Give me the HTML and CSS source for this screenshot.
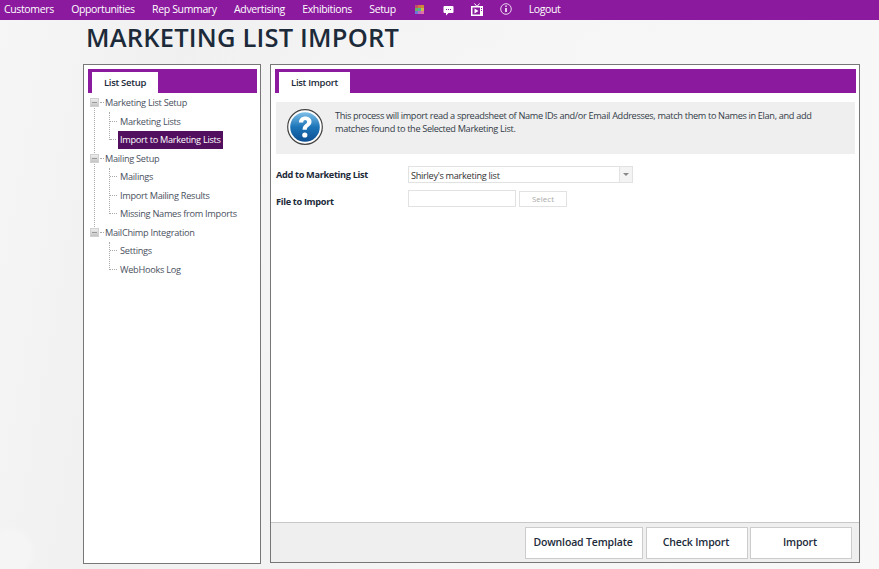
FILE: index.html
```html
<!DOCTYPE html>
<html lang="en">
<head>
<meta charset="utf-8">
<title>Marketing List Import</title>
<link rel="stylesheet" href="styles.css">
</head>
<body>
<nav class="topnav">
  <a class="navlink">Customers</a>
  <a class="navlink">Opportunities</a>
  <a class="navlink">Rep Summary</a>
  <a class="navlink">Advertising</a>
  <a class="navlink">Exhibitions</a>
  <a class="navlink">Setup</a>
  <svg class="navicon grid" width="9" height="9" viewBox="0 0 9 9">
    <rect width="3" height="3" fill="#c0506a"/><rect x="3" width="3" height="3" fill="#d8743f"/><rect x="6" width="3" height="3" fill="#c98a3a"/>
    <rect y="3" width="3" height="3" fill="#6fae5a"/><rect x="3" y="3" width="3" height="3" fill="#4fb0a0"/><rect x="6" y="3" width="3" height="3" fill="#d0b84a"/>
    <rect y="6" width="3" height="3" fill="#6a78d8"/><rect x="3" y="6" width="3" height="3" fill="#c868c0"/><rect x="6" y="6" width="3" height="3" fill="#e070a8"/>
  </svg>
  <svg class="navicon chat" width="11" height="11" viewBox="0 0 11 11">
    <path d="M1.500 1h8a1 1 0 0 1 1 1v5a1 1 0 0 1-1 1H5.500L3 10.500V8H1.500a1 1 0 0 1-1-1V2a1 1 0 0 1 1-1z" fill="#fff"/>
    <path d="M3 4.500h1M5 4.500h1M7 4.500h1" stroke="#8b1a9e" stroke-width="1"/>
  </svg>
  <svg class="navicon tv" width="12" height="13" viewBox="0 0 12 13">
    <path d="M3.500 0.500l2.500 3 2.500-3" fill="none" stroke="#fff" stroke-width="1"/>
    <rect y="3" width="12" height="10" fill="#fff"/>
    <rect x="1.500" y="4.500" width="7.500" height="7" fill="#8b1a9e"/>
    <path d="M3.500 5.500v5l4-2.500z" fill="#fff"/>
    <rect x="10" y="5" width="1" height="1" fill="#8b1a9e"/>
    <rect x="10" y="7" width="1" height="1" fill="#8b1a9e"/>
  </svg>
  <svg class="navicon info" width="12" height="12" viewBox="0 0 12 12">
    <circle cx="6" cy="6" r="5.300" fill="none" stroke="#e8d4ec" stroke-width="1"/>
    <path d="M6 5v4" stroke="#fff" stroke-width="1.600"/><path d="M6 2.500v1.300" stroke="#fff" stroke-width="1.600"/>
  </svg>
  <a class="navlink logout">Logout</a>
</nav>

<h1 class="pagetitle">MARKETING LIST IMPORT</h1>

<main class="columns">
  <section class="panel sidepanel">
    <div class="tabbar"><span class="tab">List Setup</span></div>
    <ul class="tree">
      <li class="group">
        <div class="groupname"><span class="toggle"></span><span class="dash"></span>Marketing List Setup</div>
        <ul class="branch">
          <li class="leaf"><span class="dash"></span>Marketing Lists</li>
          <li class="leaf"><span class="dash short"></span><span class="selected">Import to Marketing Lists</span></li>
        </ul>
      </li>
      <li class="group">
        <div class="groupname"><span class="toggle"></span><span class="dash"></span>Mailing Setup</div>
        <ul class="branch">
          <li class="leaf"><span class="dash"></span>Mailings</li>
          <li class="leaf"><span class="dash"></span>Import Mailing Results</li>
          <li class="leaf"><span class="dash"></span>Missing Names from Imports</li>
        </ul>
      </li>
      <li class="group last">
        <div class="groupname"><span class="toggle"></span><span class="dash"></span>MailChimp Integration</div>
        <ul class="branch">
          <li class="leaf"><span class="dash"></span>Settings</li>
          <li class="leaf"><span class="dash"></span>WebHooks Log</li>
        </ul>
      </li>
    </ul>
  </section>

  <section class="panel mainpanel">
    <div class="tabbar"><span class="tab">List Import</span></div>
    <div class="infobox">
      <svg class="helpicon" width="36" height="36" viewBox="0 0 36 36">
        <defs>
          <linearGradient id="helpblue" x1="0" y1="0" x2="0" y2="1">
            <stop offset="0" stop-color="#7fc0e8"/>
            <stop offset="0.5" stop-color="#1c75b8"/>
            <stop offset="1" stop-color="#0d4f92"/>
          </linearGradient>
        </defs>
        <circle cx="18" cy="18" r="17.300" fill="#fff" stroke="#444" stroke-width="1.200"/>
        <circle cx="18" cy="18" r="14.800" fill="url(#helpblue)"/>
        <path d="M12 13.500c0-4 3-6 6.300-6 3.600 0 6.200 2.200 6.200 5.200 0 2.300-1.200 3.500-2.800 4.700-1.500 1.100-1.900 1.800-1.900 3.400h-4.200c0-2.600.7-3.800 2.500-5.200 1.300-1 2-1.700 2-2.800 0-1.200-.8-1.900-1.900-1.900-1.300 0-2 1-2 2.600z" fill="#fff"/>
        <circle cx="17.800" cy="26" r="2.600" fill="#fff"/>
      </svg>
      <p class="infotext">This process will import read a spreadsheet of Name IDs and/or Email Addresses, match them to Names in Elan, and add matches found to the Selected Marketing List.</p>
    </div>
    <form class="importform">
      <div class="formrow">
        <label class="fieldlabel">Add to Marketing List</label>
        <div class="combo"><span class="combovalue">Shirley's marketing list</span><span class="comboarrow"></span></div>
      </div>
      <div class="formrow filerow">
        <label class="fieldlabel">File to Import</label>
        <div class="filefield"></div>
        <span class="selectbtn">Select</span>
      </div>
    </form>
    <footer class="actions">
      <button class="actionbtn download" type="button">Download Template</button>
      <button class="actionbtn check" type="button">Check Import</button>
      <button class="actionbtn import" type="button">Import</button>
    </footer>
  </section>
</main>
</body>
</html>
```

FILE: styles.css
```css
* { box-sizing: border-box; }
html, body { height: 100%; }
body {
  margin: 0;
  height: 569px;
  overflow: hidden;
  display: flex;
  flex-direction: column;
  font-family: "Open Sans", "Noto Sans", sans-serif;
  color: #2b3440;
  background:
    radial-gradient(circle at 10px 552px, #f5f5f5 0 20px, transparent 26px),
    radial-gradient(ellipse at 60% 40%, #f8f8f8 0, transparent 60%),
    linear-gradient(100deg, #f6f6f6, #f0f0f0 20%, #f5f5f5 55%, #f8f8f8);
}
.topnav {
  flex: none;
  height: 20px;
  background: #8b1a9e;
  display: flex;
  align-items: center;
  padding-left: 4px;
}
.navlink {
  color: #fff;
  font-size: 10.500px;
  letter-spacing: -0.36px;
  margin-right: 17.400px;
  line-height: 16px;
  margin-top: -3px;
  white-space: nowrap;
}
.navicon { flex: none; margin-top: -2px; }
.grid { margin-left: 1.500px; margin-right: 19px; }
.chat { margin-right: 17px; margin-top: 0; }
.tv { margin-right: 17px; margin-top: -2px; }
.info { margin-right: 17px; }
.logout { margin-right: 0; }
.pagetitle {
  flex: none;
  margin: 2px 0 0 86px;
  height: 42px;
  font-size: 25.500px;
  line-height: 30px;
  font-weight: 600;
  letter-spacing: 0.2px;
  color: #1c2a3a;
  white-space: nowrap;
}
.columns {
  flex: none;
  display: flex;
  gap: 9px;
  margin-left: 83px;
  height: 500px;
}
.panel {
  background: #fff;
  border: 1px solid #777;
  display: flex;
  flex-direction: column;
}
.sidepanel { width: 178px; padding: 4px 3px 0 4px; }
.mainpanel { width: 590px; height: 499px; padding-top: 4px; }
.tabbar {
  flex: none;
  height: 24px;
  background: #8b1a9e;
  padding: 3px 0 0 4px;
  display: flex;
}
.mainpanel .tabbar { margin: 0 3px 0 4px; }
.tab {
  background: #fff;
  height: 21px;
  font-size: 9.500px;
  font-weight: 600;
  line-height: 21px;
  letter-spacing: -0.3px;
  color: #1c2a3a;
  text-align: center;
}
.sidepanel .tab { width: 66px; }
.mainpanel .tab { width: 71px; }

.tree, .branch { list-style: none; margin: 0; padding: 0; }
.tree { font-size: 9.200px; letter-spacing: -0.28px; color: #4a5160; padding-top: 0.500px; }
.group { position: relative; }
.group::before {
  content: "";
  position: absolute;
  left: 6px;
  top: 10px;
  bottom: -8px;
  border-left: 1px dotted #aaa;
}
.group.last::before { display: none; }
.groupname {
  height: 18.500px;
  display: flex;
  align-items: center;
  padding-left: 2px;
  position: relative;
}
.toggle {
  width: 9px;
  height: 9px;
  flex: none;
  background: linear-gradient(#ededed, #c4c4c4);
  border: 1px solid #d0d0d0;
  position: relative;
  z-index: 1;
}
.toggle::after {
  content: "";
  position: absolute;
  left: 1px;
  right: 1px;
  top: 3px;
  height: 1px;
  background: #9a9a9a;
}
.dash {
  flex: none;
  width: 4px;
  border-top: 1px dotted #aaa;
  margin: 0 1px 0 1px;
}
.branch { padding-left: 21px; position: relative; }
.branch::before {
  content: "";
  position: absolute;
  left: 21px;
  top: 0;
  bottom: 9px;
  border-left: 1px dotted #aaa;
}
.leaf {
  height: 18.500px;
  display: flex;
  align-items: center;
  padding-left: 1px;
}
.leaf .dash { width: 7px; margin: 0 3px 0 0; }
.leaf .dash.short { width: 6px; margin-right: 2px; }
.selected {
  background: #520f5f;
  color: #fff;
  padding: 0 2px;
  line-height: 18px;
  height: 18px;
  white-space: nowrap;
}

.infobox {
  flex: none;
  height: 52px;
  margin: 9px 4px 0 5px;
  background: #efefef;
  display: flex;
  align-items: flex-start;
  padding: 7px 0 0 11px;
}
.helpicon { flex: none; }
.infotext {
  margin: 0 0 0 12px;
  width: 490px;
  font-size: 9.200px;
  line-height: 13px;
  letter-spacing: -0.34px;
  color: #333c48;
}
.importform {
  flex: 1;
  padding: 12px 0 0 5px;
  display: flex;
  flex-direction: column;
  gap: 7px;
}
.formrow { display: flex; align-items: center; height: 17px; }
.fieldlabel {
  width: 132px;
  flex: none;
  font-size: 9.200px;
  font-weight: 700;
  letter-spacing: -0.33px;
  color: #1c2a3a;
}
.filerow .fieldlabel { margin-top: 6px; }
.combo {
  width: 225px;
  height: 17px;
  border: 1px solid #e2e2e2;
  background: #fff;
  display: flex;
}
.combovalue {
  flex: 1;
  font-size: 9.200px;
  line-height: 17px;
  letter-spacing: -0.3px;
  padding-left: 2px;
  color: #333;
}
.comboarrow {
  flex: none;
  width: 13px;
  background: #f3f3f3;
  border-left: 1px solid #e2e2e2;
  position: relative;
}
.comboarrow::after {
  content: "";
  position: absolute;
  left: 3px;
  top: 6px;
  border-left: 3px solid transparent;
  border-right: 3px solid transparent;
  border-top: 3px solid #888;
}
.filefield {
  width: 108px;
  height: 17px;
  border: 1px solid #e2e2e2;
  background: #fff;
}
.selectbtn {
  width: 48px;
  height: 16px;
  margin-left: 3px;
  border: 1px solid #e2e2e2;
  font-size: 8px;
  line-height: 14px;
  text-align: center;
  color: #aaa;
}
.actions {
  flex: none;
  height: 40px;
  background: #efefef;
  border-top: 1px solid #c8c8c8;
  display: flex;
  justify-content: flex-end;
  gap: 3px;
  padding: 4px 7px 0 0;
}
.actionbtn {
  height: 32px;
  padding: 0 2px 2px 0;
  background: #fff;
  border: 1px solid #ccc;
  font-family: inherit;
  font-size: 10.500px;
  font-weight: 600;
  letter-spacing: -0.15px;
  color: #1c2a3a;
}
.download { width: 118px; }
.check { width: 102px; margin-right: -1px; }
.import { width: 102px; }
```
